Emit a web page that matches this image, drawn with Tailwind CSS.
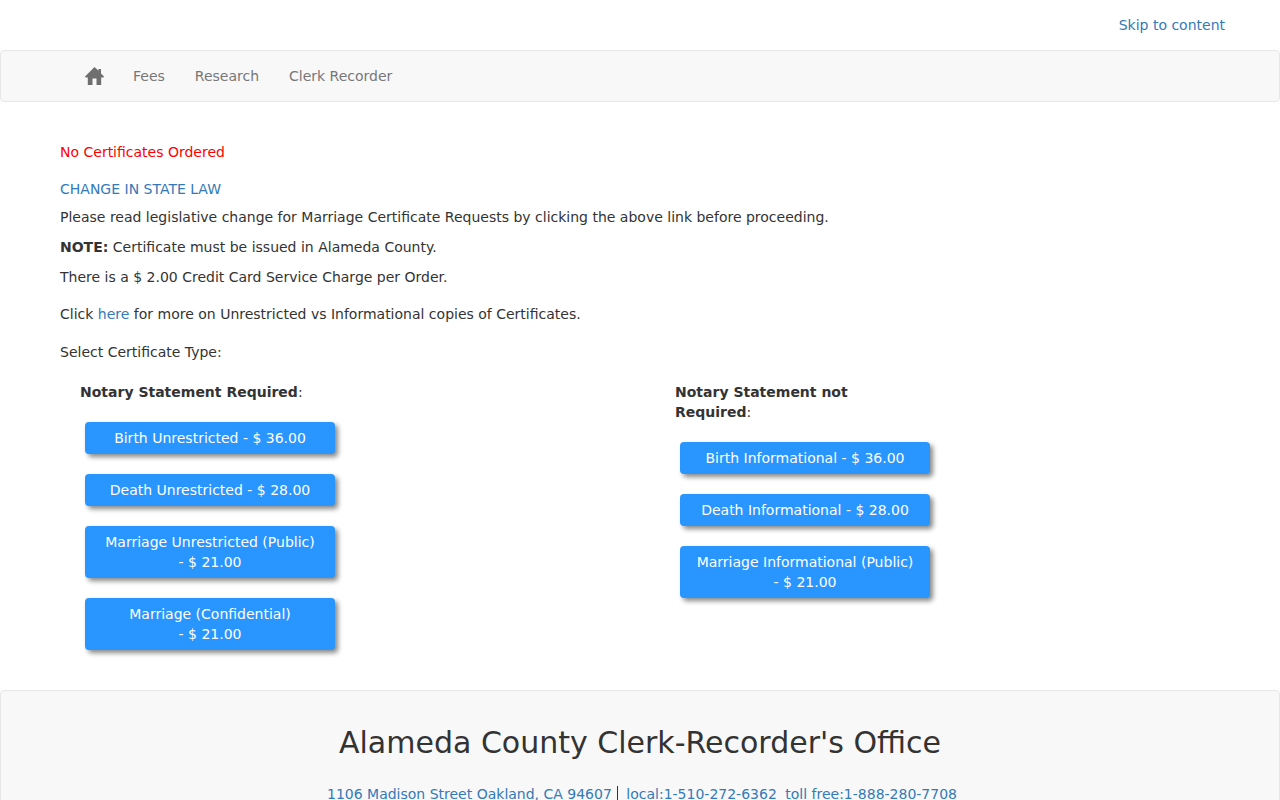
<!DOCTYPE html>
<html lang="en">
<head>
    <meta charset="UTF-8">
    <meta name="viewport" content="width=device-width, initial-scale=1.0">
    <title>Alameda County Clerk-Recorder's Office</title>
    <script src="https://cdn.jsdelivr.net/npm/@tailwindcss/browser@4"></script>
</head>
<body class="bg-white text-[#333] text-sm leading-5 font-['DejaVu_Sans',sans-serif]">
    <!-- top -->
    <div class="flex justify-end py-[15px] pr-[55px]">
        <a href="#" class="text-[#337ab7]">Skip to content</a>
    </div>

    <!-- navbar -->
    <nav class="flex items-center h-[52px] pl-[69px] bg-[#f8f8f8] border border-[#e7e7e7] rounded text-[#777]">
        <a href="#" class="pl-[15px] pr-[14px] py-[15px]">
            <svg class="w-[19px] h-[20px]" viewBox="0 0 19 20" fill="#6f6f6f"><path d="M9.5 1 L13.5 4.8 V3 H16 V7.6 L19 10.6 L18.4 11.6 H16.2 V19 H11.5 V12.5 H7.5 V19 H2.8 V11.6 H0.6 L0 10.6 Z"/></svg>
        </a>
        <a href="#" class="px-[15px]">Fees</a>
        <a href="#" class="px-[15px]">Research</a>
        <a href="#" class="px-[15px]">Clerk Recorder</a>
    </nav>

    <!-- main -->
    <main class="px-[60px] pt-[40px] pb-[40px]">
        <p class="text-[#f00]">No Certificates Ordered</p>
        <p class="mt-[17px]"><a href="#" class="text-[#337ab7]">CHANGE IN STATE LAW</a></p>
        <p class="mt-2">Please read legislative change for Marriage Certificate Requests by clicking the above link before proceeding.</p>
        <p class="mt-2.5"><b>NOTE:</b> Certificate must be issued in Alameda County.</p>
        <p class="mt-2.5">There is a $ 2.00 Credit Card Service Charge per Order.</p>
        <p class="mt-[17px]">Click <a href="#" class="text-[#337ab7]">here</a> for more on Unrestricted vs Informational copies of Certificates.</p>
        <p class="mt-[18px]">Select Certificate Type:</p>

        <div class="grid grid-cols-[595px_1fr] pl-5 mt-5">
            <div>
                <p class="w-[250px]"><b>Notary Statement Required</b>:</p>
                <div class="flex flex-col gap-5 mt-5 ml-[5px] w-[250px]">
                    <a href="#" class="block px-4 py-1.5 text-center text-white bg-[#2995ff] rounded shadow-[3px_3px_5px_#888]">Birth Unrestricted - $ 36.00</a>
                    <a href="#" class="block px-4 py-1.5 text-center text-white bg-[#2995ff] rounded shadow-[3px_3px_5px_#888]">Death Unrestricted - $ 28.00</a>
                    <a href="#" class="block px-4 py-1.5 text-center text-white bg-[#2995ff] rounded shadow-[3px_3px_5px_#888]">Marriage Unrestricted (Public) - $ 21.00</a>
                    <a href="#" class="block px-4 py-1.5 text-center text-white bg-[#2995ff] rounded shadow-[3px_3px_5px_#888]">Marriage (Confidential)<br>- $ 21.00</a>
                </div>
            </div>
            <div>
                <p class="w-[240px]"><b>Notary Statement not Required</b>:</p>
                <div class="flex flex-col gap-5 mt-5 ml-[5px] w-[250px]">
                    <a href="#" class="block px-4 py-1.5 text-center text-white bg-[#2995ff] rounded shadow-[3px_3px_5px_#888]">Birth Informational - $ 36.00</a>
                    <a href="#" class="block px-4 py-1.5 text-center text-white bg-[#2995ff] rounded shadow-[3px_3px_5px_#888]">Death Informational - $ 28.00</a>
                    <a href="#" class="block px-4 py-1.5 text-center text-white bg-[#2995ff] rounded shadow-[3px_3px_5px_#888]">Marriage Informational (Public) - $ 21.00</a>
                </div>
            </div>
        </div>
    </main>

    <!-- footer -->
    <footer class="bg-[#f8f8f8] border border-[#e7e7e7] rounded text-center pt-[32px] pb-5">
        <h1 class="text-[30px] leading-10">Alameda County Clerk-Recorder's Office</h1>
        <p class="mt-[21px] pl-[4px]">
            <a href="#" class="text-[#337ab7]">1106 Madison Street Oakland, CA 94607</a>
            <span class="inline-block h-[18px] border-l border-[#333] ml-px mr-[8px] align-middle"></span><a href="#" class="text-[#337ab7]">local:1-510-272-6362</a>
            <a href="#" class="text-[#337ab7] ml-[4px]">toll free:1-888-280-7708</a>
        </p>
    </footer>
</body>
</html>
